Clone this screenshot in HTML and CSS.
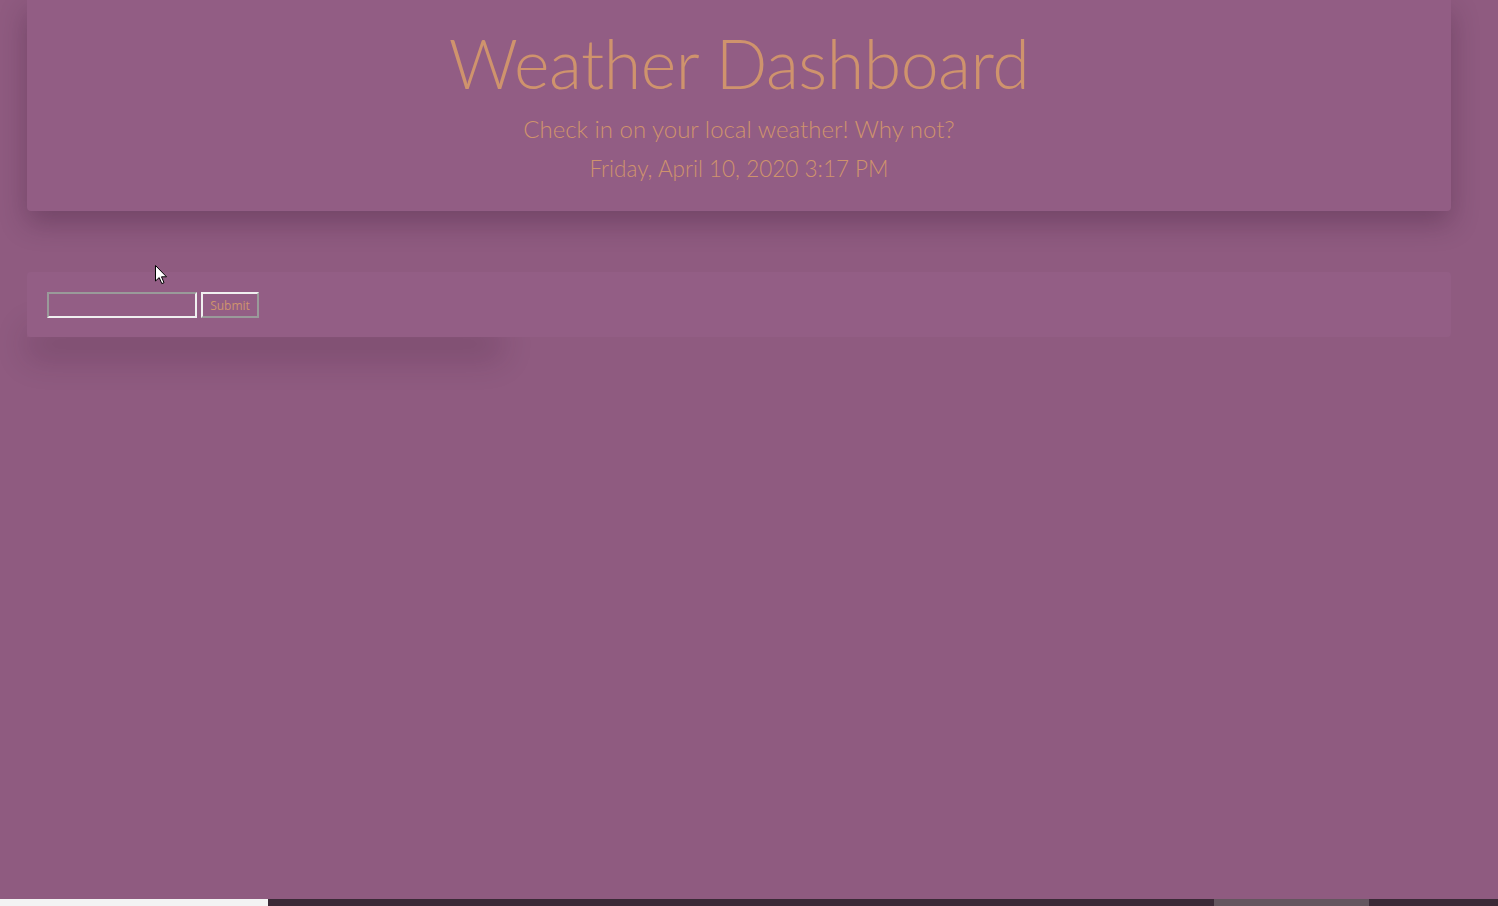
FILE: index.html
```html
<!DOCTYPE html>
<html>
<head>
<meta charset="utf-8">
<link rel="stylesheet" href="styles.css">
</head>
<body>
<div class="page">
  <header class="hero">
    <h1 class="title">Weather Dashboard</h1>
    <p class="lead">Check in on your local weather! Why not?</p>
    <p class="lead date">Friday, April 10, 2020 3:17 PM</p>
  </header>
  <section class="search">
    <form class="search-form">
      <input class="search-input" type="text">
      <button class="search-btn" type="button">Submit</button>
    </form>
    <svg class="cursor" width="13" height="20" viewBox="0 0 13 20">
      <path d="M0.5 0.5 L0.5 16 L4.2 12.6 L6.8 18.6 L9 17.7 L6.5 11.8 L11.5 11.8 Z" fill="#ffffff" stroke="#000000" stroke-width="1"/>
    </svg>
  </section>
  <div class="results"></div>
  <div class="spacer"></div>
  <div class="taskbar">
    <div class="tb-white"></div>
    <div class="tb-dark"></div>
    <div class="tb-gray"></div>
    <div class="tb-dark2"></div>
  </div>
</div>
</body>
</html>
```

FILE: styles.css
```css
html, body {
  margin: 0;
  padding: 0;
  background: #8f5b80;
  height: 100%;
}
body {
  font-family: Lato, "Open Sans", sans-serif;
  color: #cf936d;
}
.page {
  height: 906px;
  display: flex;
  flex-direction: column;
  overflow: hidden;
}
.hero {
  margin: 0 47px 0 27px;
  height: 211px;
  background: #925d84;
  border-radius: 0 0 4px 4px;
  box-shadow: 0 12px 28px rgba(40, 10, 35, 0.28);
  text-align: center;
  display: flex;
  flex-direction: column;
  align-items: center;
  padding-top: 23px;
  box-sizing: border-box;
}
.title {
  margin: 0;
  font-weight: 300;
  font-size: 68px;
  line-height: 80px;
  letter-spacing: -0.5px;
}
.lead {
  margin: 6px 0 0;
  font-weight: 300;
  font-size: 24px;
  line-height: 40px;
}
.date {
  margin-top: 0;
  font-size: 22.5px;
}
.search {
  margin: 61px 47px 0 27px;
  height: 65px;
  background: #935e85;
  border-radius: 4px;
  padding: 20px;
  box-sizing: border-box;
  position: relative;
  z-index: 1;
}
.search-form {
  display: flex;
  gap: 4px;
}
.search-input {
  width: 150px;
  height: 26px;
  box-sizing: border-box;
  margin: 0;
  background: transparent;
  border: 2px solid;
  border-color: #9a9a9a #f0f0f0 #f0f0f0 #9a9a9a;
  padding: 0;
}
.search-btn {
  width: 58px;
  height: 26px;
  box-sizing: border-box;
  margin: 0;
  padding: 0;
  background: transparent;
  border: 2px solid;
  border-color: #f0f0f0 #9a9a9a #9a9a9a #f0f0f0;
  color: #cf936d;
  font-family: "Open Sans", sans-serif;
  font-size: 12px;
}
.results {
  margin-left: 27px;
  width: 475px;
  height: 30px;
  margin-top: -30px;
  box-shadow: 0 22px 32px rgba(40, 10, 35, 0.18);
}
.spacer {
  flex: 1;
}
.taskbar {
  height: 7px;
  display: flex;
}
.tb-white { width: 268px; background: #f3f3f3; }
.tb-dark { width: 946px; background: #3b2a37; }
.tb-gray { width: 155px; background: #64565f; }
.tb-dark2 { flex: 1; background: #3b2a37; }
.cursor {
  position: absolute;
  left: 128px;
  top: -7px;
}
```
